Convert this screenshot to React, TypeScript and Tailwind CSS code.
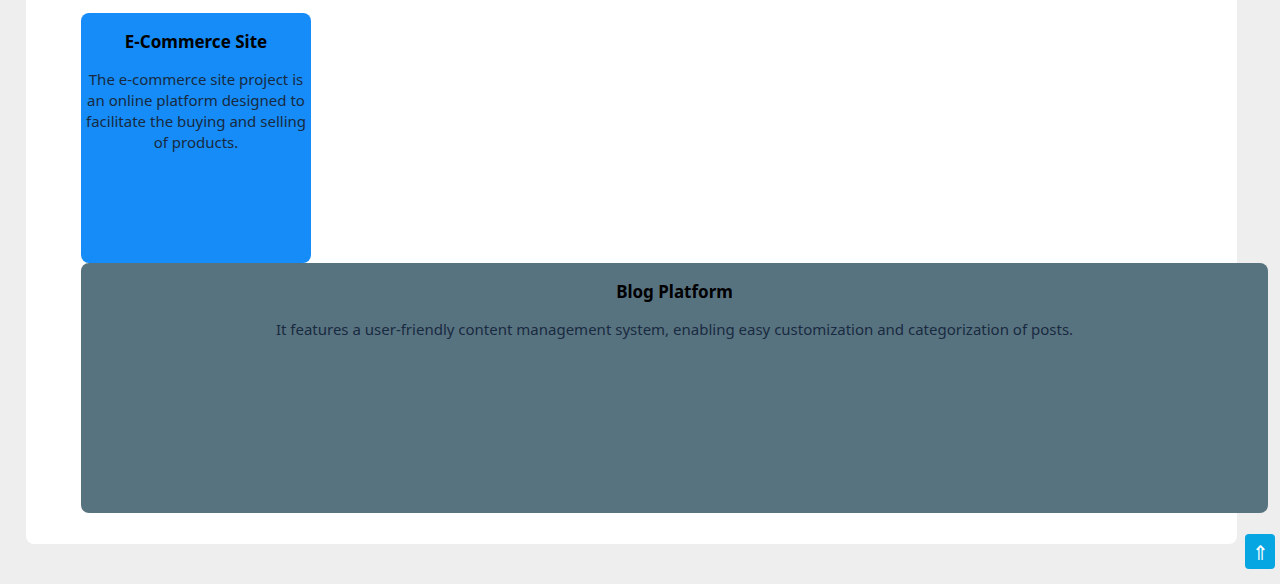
import React from 'react';

const projects = [
  {
    title: 'E-Commerce Site',
    text: 'The e-commerce site project is an online platform designed to facilitate the buying and selling of products.',
    className: 'w-[230px] bg-[#168cf8] rounded-lg',
  },
  {
    title: 'Blog Platform',
    text: 'It features a user-friendly content management system, enabling easy customization and categorization of posts.',
    className: 'w-[1187px] bg-[#587380] rounded-lg',
  },
];

export default function App() {
  return (
    <div className="relative min-h-[584px] bg-[#eeeeee] font-['Segoe_UI','Noto_Sans',sans-serif]">
      <div className="ml-[26px] w-[1211px] bg-white rounded-b-lg pt-[13px] pb-[31px]">
        <div className="ml-[55px] flex flex-col">
          {projects.map((p) => (
            <div key={p.title} className={`h-[250px] px-[4px] text-center ${p.className}`}>
              <h3 className="mt-[17px] text-[17px] leading-[24px] font-bold text-black">{p.title}</h3>
              <p className="mt-[15px] text-[15px] leading-[21px] text-[#182a40]">{p.text}</p>
            </div>
          ))}
        </div>
      </div>

      {/* back to top */}
      <button className="absolute right-[5px] bottom-[15px] w-[30px] h-[35px] rounded bg-[#06a6e2] text-white text-[20px] leading-none flex items-center justify-center pt-[3px]">
        ⇑
      </button>
    </div>
  );
}
